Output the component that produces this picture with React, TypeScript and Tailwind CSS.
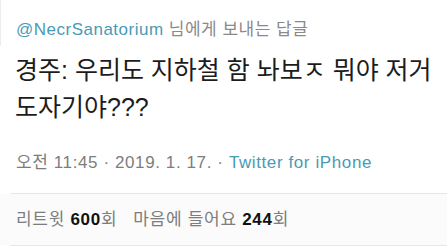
const font = { fontFamily: '"Liberation Sans", "Noto Sans CJK KR", sans-serif' }

export default function App() {
  return (
    <div className="w-[447px] h-[250px] overflow-hidden bg-white text-[#1c1c1c]" style={font}>
      {/* reply header */}
      <div className="h-[46px] flex items-end pb-[4px] pl-[15px] border-l-2 border-[#ececec] -ml-[1px]">
        <span className="text-[17px] text-[#8a8a8a] tracking-[0.5px]">
          <span className="text-[#4a9ab4]">@NecrSanatorium</span> 님에게 보내는 답글
        </span>
      </div>

      {/* tweet body */}
      <p className="pl-[15px] pt-[6px] text-[25px] leading-[37px] whitespace-nowrap">
        경주: 우리도 지하철 함 놔보ㅈ 뭐야 저거
        <br />
        도자기야???
      </p>

      {/* time + client */}
      <div className="h-[67px] flex items-center pl-[16px] pt-[6px] text-[17px] tracking-[0.6px] text-[#7d7d7d]">
        <span>
          오전 11:45 · 2019. 1. 17. · <span className="text-[#4a9ab4]">Twitter for iPhone</span>
        </span>
      </div>

      <div className="ml-[10px] border-t border-[#e6e6e6]" />

      {/* counts */}
      <div className="h-[51px] flex items-center pl-[16px] text-[17px] tracking-[0.7px] text-[#7d7d7d] bg-[#fbfbfb]">
        <span>
          리트윗 <b className="text-[#111]">600</b>회
        </span>
        <span className="ml-[16px]">
          마음에 들어요 <b className="text-[#111]">244</b>회
        </span>
      </div>

      <div className="ml-[10px] border-t border-[#e6e6e6]" />
    </div>
  )
}
